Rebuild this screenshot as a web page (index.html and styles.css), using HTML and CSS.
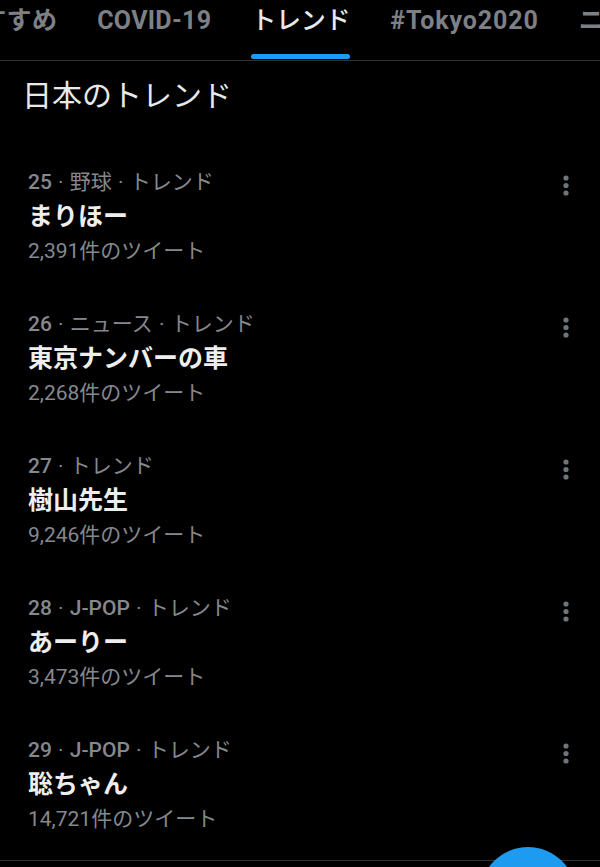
FILE: index.html
```html
<!DOCTYPE html>
<html lang="ja">
<head>
  <meta charset="UTF-8" />
  <meta name="viewport" content="width=device-width, initial-scale=1.0"/>
  <title>トレンド</title>
  <link rel="stylesheet" href="styles.css">
</head>
<body>
  <div class="screen">
    <nav class="tabs">
      <div class="tab">おすすめ</div>
      <div class="tab">COVID-19</div>
      <div class="tab active">トレンド</div>
      <div class="tab wide">#Tokyo2020</div>
      <div class="tab">ニュース</div>
    </nav>

    <h1 class="heading">日本のトレンド</h1>

    <ul class="trends">
      <li class="trend">
        <div class="info">
          <div class="meta"><span class="num">25</span> · 野球 · トレンド</div>
          <div class="title">まりほー</div>
          <div class="count">2,391件のツイート</div>
        </div>
        <svg class="more" width="6" height="22" viewBox="0 0 6 22"><circle cx="3" cy="3" r="2.6"/><circle cx="3" cy="10.5" r="2.6"/><circle cx="3" cy="18" r="2.6"/></svg>
      </li>
      <li class="trend">
        <div class="info">
          <div class="meta"><span class="num">26</span> · ニュース · トレンド</div>
          <div class="title">東京ナンバーの車</div>
          <div class="count">2,268件のツイート</div>
        </div>
        <svg class="more" width="6" height="22" viewBox="0 0 6 22"><circle cx="3" cy="3" r="2.6"/><circle cx="3" cy="10.5" r="2.6"/><circle cx="3" cy="18" r="2.6"/></svg>
      </li>
      <li class="trend">
        <div class="info">
          <div class="meta"><span class="num">27</span> · トレンド</div>
          <div class="title">樹山先生</div>
          <div class="count">9,246件のツイート</div>
        </div>
        <svg class="more" width="6" height="22" viewBox="0 0 6 22"><circle cx="3" cy="3" r="2.6"/><circle cx="3" cy="10.5" r="2.6"/><circle cx="3" cy="18" r="2.6"/></svg>
      </li>
      <li class="trend">
        <div class="info">
          <div class="meta"><span class="num">28</span> · <span class="num">J-POP</span> · トレンド</div>
          <div class="title">あーりー</div>
          <div class="count">3,473件のツイート</div>
        </div>
        <svg class="more" width="6" height="22" viewBox="0 0 6 22"><circle cx="3" cy="3" r="2.6"/><circle cx="3" cy="10.5" r="2.6"/><circle cx="3" cy="18" r="2.6"/></svg>
      </li>
      <li class="trend">
        <div class="info">
          <div class="meta"><span class="num">29</span> · <span class="num">J-POP</span> · トレンド</div>
          <div class="title">聡ちゃん</div>
          <div class="count">14,721件のツイート</div>
        </div>
        <svg class="more" width="6" height="22" viewBox="0 0 6 22"><circle cx="3" cy="3" r="2.6"/><circle cx="3" cy="10.5" r="2.6"/><circle cx="3" cy="18" r="2.6"/></svg>
      </li>
    </ul>

    <div class="bottom-bar"></div>
    <div class="fab"></div>
  </div>
</body>
</html>
```

FILE: styles.css
```css
* {
  box-sizing: border-box;
}

body {
  margin: 0;
  background: #000;
  color: #e7e9ea;
  font-family: Roboto, "Noto Sans CJK JP", sans-serif;
}

.screen {
  position: relative;
  width: 600px;
  height: 867px;
  overflow: hidden;
}

/* top tabs */
.tabs {
  display: flex;
  gap: 40px;
  height: 61px;
  margin-left: -44px;
  border-bottom: 1px solid #2f3336;
}

.tab {
  flex-shrink: 0;
  display: flex;
  flex-direction: column;
  padding-top: 7px;
  font-size: 25px;
  line-height: 28px;
  font-weight: 700;
  letter-spacing: 0.3px;
  color: #7d8186;
  white-space: nowrap;
}

.tab.wide {
  letter-spacing: 0.9px;
}

.tab.active {
  color: #e7e9ea;
  font-weight: 500;
  letter-spacing: -0.3px;
}

.tab.active::after {
  content: "";
  height: 5px;
  margin-top: 19px;
  border-radius: 3px;
  background: #1d9bf0;
}

.heading {
  margin: 18px 0 33px 22px;
  font-size: 30px;
  line-height: 34px;
  font-weight: 400;
  color: #e7e9ea;
}

/* trend list */
.trends {
  list-style: none;
  margin: 0;
  padding: 0;
}

.trend {
  display: flex;
  align-items: flex-start;
  padding: 19px 31px 20px 28px;
  height: 142px;
}

.info {
  flex: 1;
}

.meta,
.title,
.count {
  line-height: 34.5px;
  white-space: nowrap;
}

.meta {
  font-size: 21px;
  word-spacing: 1px;
  color: #85898e;
}

.num {
  font-weight: 500;
}

.title {
  font-size: 25px;
  font-weight: 700;
  color: #eeeeee;
}

.count {
  font-size: 21px;
  color: #85898e;
}

.more {
  margin-top: 10px;
  fill: #6e767d;
}

.bottom-bar {
  margin-top: 4px;
  height: 10px;
  border-top: 1px solid #2f3336;
}

.fab {
  position: absolute;
  left: 480px;
  top: 847px;
  width: 96px;
  height: 96px;
  border-radius: 50%;
  background: #1d9bf0;
}
```
